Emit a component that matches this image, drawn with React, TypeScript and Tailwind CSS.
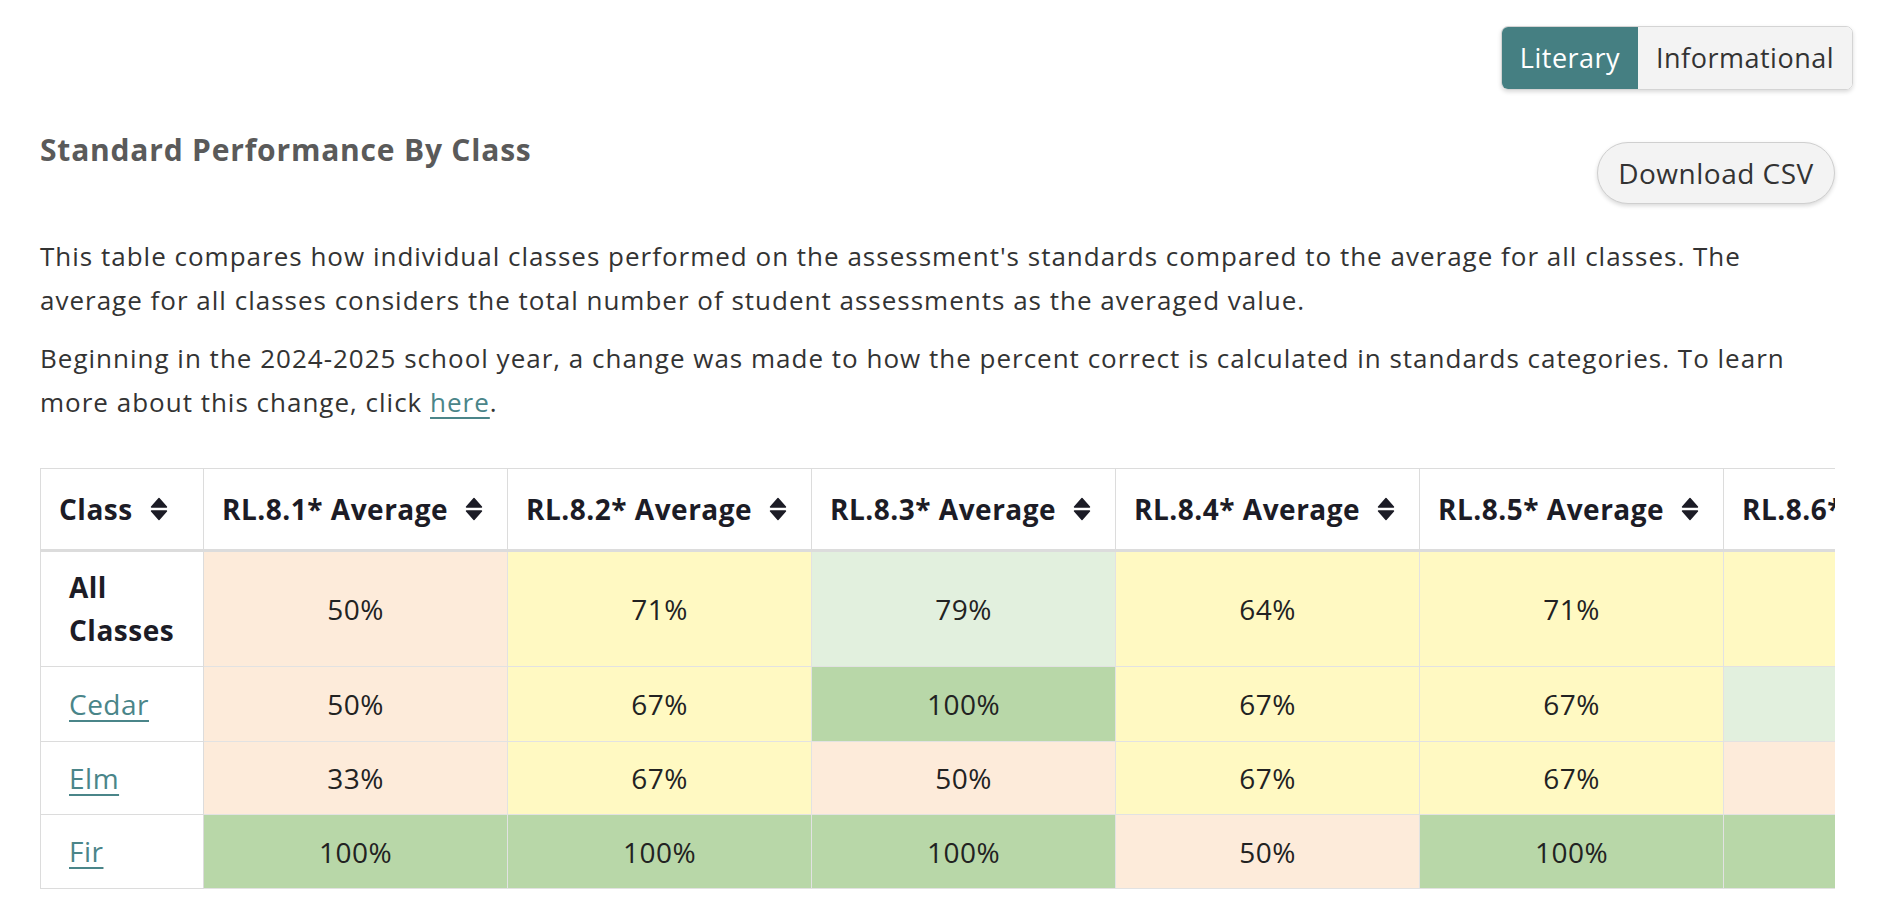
import React from "react";

type Tone = "p" | "y" | "lg" | "g";

const toneClass: Record<Tone, string> = {
  p: "bg-[#fdebda]",
  y: "bg-[#fff9c2]",
  lg: "bg-[#e2f0de]",
  g: "bg-[#b8d7a8]",
};

const cols = ["RL.8.1*", "RL.8.2*", "RL.8.3*", "RL.8.4*", "RL.8.5*", "RL.8.6*"];

const rows: { name: string; link: boolean; cells: [string, Tone][] }[] = [
  {
    name: "All Classes",
    link: false,
    cells: [
      ["50%", "p"],
      ["71%", "y"],
      ["79%", "lg"],
      ["64%", "y"],
      ["71%", "y"],
      ["71%", "y"],
    ],
  },
  {
    name: "Cedar",
    link: true,
    cells: [
      ["50%", "p"],
      ["67%", "y"],
      ["100%", "g"],
      ["67%", "y"],
      ["67%", "y"],
      ["83%", "lg"],
    ],
  },
  {
    name: "Elm",
    link: true,
    cells: [
      ["33%", "p"],
      ["67%", "y"],
      ["50%", "p"],
      ["67%", "y"],
      ["67%", "y"],
      ["50%", "p"],
    ],
  },
  {
    name: "Fir",
    link: true,
    cells: [
      ["100%", "g"],
      ["100%", "g"],
      ["100%", "g"],
      ["50%", "p"],
      ["100%", "g"],
      ["100%", "g"],
    ],
  },
];

const rowHeights = ["h-[116px]", "h-[75px]", "h-[73px]", "h-[74px]"];

function SortIcon() {
  return (
    <svg width="18" height="24" viewBox="0 0 18 24" className="shrink-0">
      <path d="M9 1.5 L16.5 10 H1.5 Z" fill="#1c1c26" stroke="#1c1c26" strokeWidth="1.4" strokeLinejoin="round" />
      <path d="M9 22.5 L16.5 14 H1.5 Z" fill="#1c1c26" stroke="#1c1c26" strokeWidth="1.4" strokeLinejoin="round" />
    </svg>
  );
}

export default function App() {
  return (
    <div className="min-h-[922px] bg-white font-['Open_Sans',sans-serif] text-[#333]">
      <div className="pl-[40px] pr-[51px] pt-[26px]">
        <div className="flex justify-end mr-[-18px]">
          <div className="flex h-[64px] rounded-[7px] border border-[#d4d4d4] shadow-[0_2px_4px_rgba(0,0,0,0.15)] overflow-hidden text-[27px] tracking-[0.5px]">
            <div className="w-[136px] bg-[#457f82] text-white flex items-center justify-center">Literary</div>
            <div className="w-[214px] bg-[#f3f3f3] text-[#333] flex items-center justify-center">Informational</div>
          </div>
        </div>

        <div className="flex justify-between items-start mt-[42px]">
          <h2 className="text-[30px] leading-[36px] tracking-[0.8px] font-bold text-[#5a5a5a]">Standard Performance By Class</h2>
          <button className="mt-[10px] h-[62px] w-[238px] rounded-full border border-[#cfcfcf] bg-[#f3f3f3] shadow-[0_2px_4px_rgba(0,0,0,0.15)] text-[28px] tracking-[0.5px] text-[#333]">
            Download CSV
          </button>
        </div>

        <p className="mt-[30px] text-[26px] leading-[44px] tracking-[1px]">
          This table compares how individual classes performed on the assessment's standards compared to the average for all classes. The average for all classes considers the total number of student assessments as the averaged value.
        </p>
        <p className="mt-[14px] text-[26px] leading-[44px] tracking-[1px]">
          Beginning in the 2024-2025 school year, a change was made to how the percent correct is calculated in standards categories. To learn more about this change, click{" "}
          <a className="text-[#4a8589] underline underline-offset-[5px]">here</a>.
        </p>

        <div className="mt-[44px] overflow-hidden">
          <table className="table-fixed border-collapse w-[1987px] text-[28px] tracking-[0.5px]">
            <colgroup>
              <col className="w-[163px]" />
              {cols.map((c) => (
                <col key={c} className="w-[304px]" />
              ))}
            </colgroup>
            <thead>
              <tr className="h-[82px]">
                <th className="border border-[#dcdcdc] border-b-[3px] px-[18px] text-left font-bold text-[#1c1c26]">
                  <div className="flex items-center gap-[17px]">
                    <span>Class</span>
                    <SortIcon />
                  </div>
                </th>
                {cols.map((c) => (
                  <th key={c} className="border border-[#dcdcdc] border-b-[3px] px-[18px] text-left font-bold text-[#1c1c26] whitespace-nowrap">
                    <div className="flex items-center gap-[17px]">
                      <span>{c} Average</span>
                      <SortIcon />
                    </div>
                  </th>
                ))}
              </tr>
            </thead>
            <tbody>
              {rows.map((r, i) => (
                <tr key={r.name} className={rowHeights[i]}>
                  <td className="border border-[#dcdcdc] pl-[28px] pr-[10px] leading-[43px]">
                    {r.link ? (
                      <a className="text-[#4a8589] underline underline-offset-[5px]">{r.name}</a>
                    ) : (
                      <span className="font-bold text-[#1c1c26]">{r.name}</span>
                    )}
                  </td>
                  {r.cells.map(([v, t], j) => (
                    <td key={j} className={`border border-[#e2e2e2] text-center text-[#222] ${toneClass[t]}`}>
                      {v}
                    </td>
                  ))}
                </tr>
              ))}
            </tbody>
          </table>
        </div>
      </div>
    </div>
  );
}
